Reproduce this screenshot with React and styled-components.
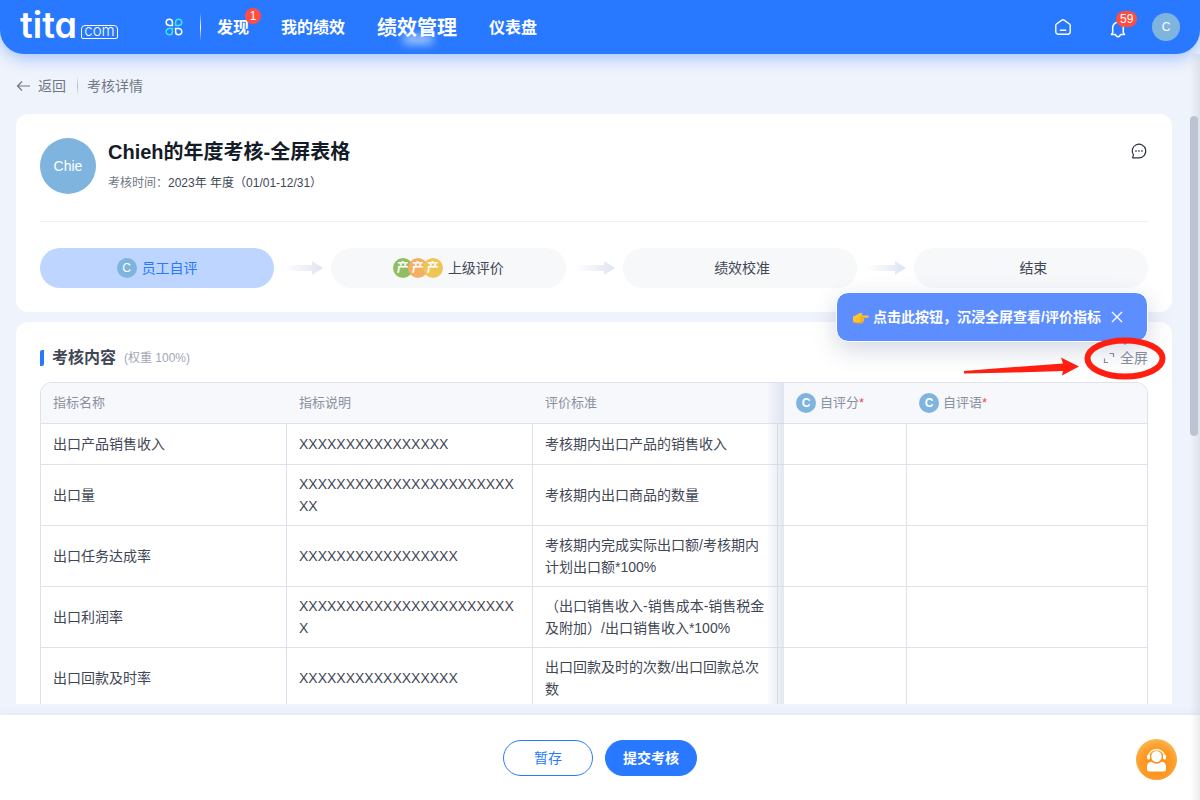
import React from "react";
import styled, { createGlobalStyle } from "styled-components";

const GlobalStyle = createGlobalStyle`
    * {
        box-sizing: border-box;
    }
    body {
        margin: 0;
        font-family: "Liberation Sans", "Noto Sans CJK SC", sans-serif;
        font-size: 14px;
        line-height: 22px;
        color: #3f4755;
        background: #eff3fb;
    }
    button {
        font-family: inherit;
        cursor: pointer;
    }
    a {
        color: inherit;
        text-decoration: none;
    }
`

const Page = styled.div`
    position: relative;
    height: 100vh;
    display: flex;
    flex-direction: column;
    overflow: hidden;
`

const Header = styled.header`
    display: flex;
    align-items: center;
    flex: none;
    height: 54px;
    padding: 0 20px;
    color: #fff;
    background: #2879ff;
    border-radius: 0 0 24px 24px;
    box-shadow: 0 4px 16px rgba(40, 121, 255, 0.4);
`

const Logo = styled.a`
    display: flex;
    align-items: flex-end;
    width: 98px;
    height: 24px;
    margin-right: 47px;
    font-family: Inter, "Liberation Sans", sans-serif;
`

const LogoName = styled.span`
    font-size: 36px;
    line-height: 28px;
    font-weight: 600;
    font-feature-settings: "cv11";
`

const LogoSuffix = styled.span`
    flex: 1;
    margin-left: 4px;
    border: 1px solid #fff;
    border-radius: 4px 4px 2px 2px;
    font-size: 15px;
    font-weight: 300;
    line-height: 10px;
    height: 14px;
    text-align: center;
`

const IconButton = styled.button`
    position: relative;
    display: flex;
    padding: ${(p) => p.$pad || "0"};
    border: none;
    background: none;
    color: inherit;
`

const Divider = styled.span`
    width: 1px;
    height: ${(p) => p.$height};
    margin: 0 ${(p) => p.$space} 0 ${(p) => p.$before};
    background: linear-gradient(transparent, ${(p) => p.$color}, transparent);
`

const Nav = styled.nav`
    display: flex;
    align-items: center;
    gap: 32px;
    flex: 1;
    padding-top: 2px;
`

const NavLink = styled.a`
    position: relative;
    font-size: ${(p) => (p.$active ? "20px" : "16px")};
    font-weight: 700;
    white-space: nowrap;
`

const Glow = styled.span`
    position: absolute;
    left: 26px;
    bottom: -5px;
    width: 30px;
    height: 9px;
    border-radius: 4px;
    background: rgba(255, 255, 255, 0.6);
    filter: blur(4px);
`

const Badge = styled.span`
    position: absolute;
    top: ${(p) => p.$top};
    left: ${(p) => p.$left};
    min-width: 16px;
    height: 16px;
    padding: 0 4px;
    border-radius: 8px;
    background: #ff4d42;
    color: #fff;
    font-size: 12px;
    font-weight: 400;
    line-height: 16px;
    text-align: center;
`

const Tools = styled.div`
    display: flex;
    align-items: center;
    gap: 26px;
`

const Avatar = styled.span`
    display: inline-flex;
    align-items: center;
    justify-content: center;
    flex: none;
    width: ${(p) => p.$size}px;
    height: ${(p) => p.$size}px;
    border-radius: 50%;
    background: ${(p) => p.$color || "#7eb4de"};
    color: #fff;
    font-size: ${(p) => (p.$size > 50 ? "14px" : "12px")};
    font-weight: ${(p) => (p.$bold ? 700 : 400)};
    line-height: 16px;
`

const AvatarGroup = styled.span`
    display: flex;
    ${Avatar} + ${Avatar} {
        margin-left: -5px;
    }
`

const Crumbs = styled.div`
    display: flex;
    align-items: center;
    flex: none;
    height: 60px;
    padding: 4px 16px 0;
    color: #6f7886;
`

const BackLink = styled.a`
    display: flex;
    align-items: center;
    gap: 7px;
`

const Main = styled.main`
    flex: 1;
    min-height: 0;
    overflow: hidden;
    display: flex;
    flex-direction: column;
    gap: 10px;
    padding: 0 28px 0 16px;
    margin-bottom: 11px;
`

const Card = styled.section`
    flex: none;
    padding: 24px;
    border-radius: 12px;
    background: #fff;
`

const Summary = styled.div`
    display: flex;
    gap: 12px;
    padding-bottom: 27px;
    border-bottom: 1px solid #eff1f5;
    margin-bottom: 26px;
`

const SummaryText = styled.div`
    flex: 1;
`

const Title = styled.h1`
    margin: 0 0 6px;
    font-size: 20px;
    line-height: 28px;
    font-weight: 600;
    color: #141c28;
`

const Period = styled.p`
    margin: 0;
    font-size: 12px;
    color: #3f4755;
`

const Muted = styled.span`
    color: #6f7886;
`

const Steps = styled.div`
    display: flex;
    align-items: center;
`

const Step = styled.div`
    flex: 1;
    display: flex;
    align-items: center;
    justify-content: center;
    gap: 5px;
    height: 40px;
    border-radius: 20px;
    background: ${(p) => (p.$active ? "#bdd5ff" : "#f7f8fa")};
    color: ${(p) => (p.$active ? "#2879ff" : "#3f4755")};
`

const StepArrow = styled.svg`
    flex: none;
    width: 57px;
    height: 14px;
`

const SectionHead = styled.div`
    display: flex;
    align-items: center;
    height: 24px;
    margin-bottom: 12px;
`

const SectionTitle = styled.h2`
    display: flex;
    align-items: center;
    gap: 8px;
    margin: 0 8px 0 0;
    font-size: 16px;
    font-weight: 600;
    &::before {
        content: "";
        width: 4px;
        height: 16px;
        border-radius: 2px 0 2px 0;
        background: #2879ff;
    }
`

const Weight = styled.span`
    flex: 1;
    font-size: 12px;
    color: #a0a7b5;
`

const FullScreen = styled.div`
    position: relative;
`

const FullScreenButton = styled.button`
    display: flex;
    align-items: center;
    gap: 5px;
    padding: 0;
    border: none;
    background: none;
    color: #89919f;
    font-size: 14px;
    line-height: 24px;
`

const Tip = styled.div`
    position: absolute;
    right: 0;
    bottom: 28px;
    display: flex;
    align-items: center;
    width: 312px;
    height: 50px;
    padding: 0 24px 0 16px;
    border: 1px solid #fff;
    border-radius: 12px;
    background: #5c8eff;
    background-clip: padding-box;
    box-shadow: 0 8px 24px rgba(40, 60, 110, 0.2);
    color: #fff;
    font-weight: 700;
    white-space: nowrap;
    &::after {
        content: "";
        position: absolute;
        right: 19px;
        bottom: -4px;
        border: 3px solid transparent;
        border-top-color: #5c8eff;
        border-bottom: none;
    }
`

const TipText = styled.span`
    flex: 1;
    margin-left: 4px;
`

const Marker = styled.svg`
    position: absolute;
    right: -19px;
    top: -10px;
    width: 204px;
    height: 44px;
    pointer-events: none;
`

const TableFrame = styled.div`
    border: 1px solid #dfe2ea;
    border-bottom: none;
    border-radius: 12px 12px 0 0;
    overflow: hidden;
`

const Table = styled.table`
    width: 100%;
    table-layout: fixed;
    border-collapse: separate;
    border-spacing: 0;
`

const Col = styled.col`
    width: ${(p) => p.$width};
`

const Th = styled.th`
    position: relative;
    height: 41px;
    padding: 0 12px 0 ${(p) => (p.$pinned ? "18px" : "12px")};
    border-bottom: 1px solid #dfe2ea;
    background: #f7f8fc;
    color: #89919f;
    font-size: 13px;
    font-weight: 400;
    text-align: left;
`

const HeadLabel = styled.span`
    display: flex;
    align-items: center;
    gap: 4px;
`

const Required = styled.span`
    color: #f5484f;
`

const Td = styled.td`
    position: relative;
    height: 41px;
    padding: 8px 12px;
    border-bottom: 1px solid #dfe2ea;
    border-right: 1px solid #dfe2ea;
    word-break: break-all;
    &:last-child {
        border-right: none;
    }
`

// Shade along the left edge of the pinned columns
const PinShade = styled.span`
    position: absolute;
    top: 0;
    bottom: -1px;
    left: -10px;
    width: 16px;
    background: linear-gradient(to right, rgba(200, 208, 226, 0.08), rgba(200, 208, 226, 0.5));
`

const Footer = styled.footer`
    position: relative;
    flex: none;
    display: flex;
    justify-content: center;
    gap: 12px;
    padding: 25px 0 24px;
    background: #fff;
    box-shadow: 0 -2px 8px rgba(60, 80, 130, 0.06);
`

const Button = styled.button`
    min-width: 90px;
    height: 36px;
    padding: 0 17px 2px;
    border: 1px solid #2879ff;
    border-radius: 18px;
    background: ${(p) => (p.$primary ? "#2879ff" : "#fff")};
    color: ${(p) => (p.$primary ? "#fff" : "#2879ff")};
    font-size: 14px;
    font-weight: ${(p) => (p.$primary ? 700 : 400)};
`

const Helper = styled.button`
    position: absolute;
    right: 23px;
    top: 24px;
    width: 41px;
    height: 41px;
    padding: 0;
    border: none;
    background: none;
`

const ScrollThumb = styled.div`
    position: absolute;
    top: 116px;
    right: 2px;
    width: 8px;
    height: 320px;
    border-radius: 4px;
    background: #bcc4d4;
`

const EdgeShade = styled.div`
    position: absolute;
    top: 54px;
    right: 0;
    bottom: 0;
    width: 10px;
    background: linear-gradient(to right, transparent, rgba(0, 0, 0, 0.07));
    pointer-events: none;
`

const rows = [
    ["出口产品销售收入", "XXXXXXXXXXXXXXXX", "考核期内出口产品的销售收入"],
    ["出口量", "XXXXXXXXXXXXXXXXXXXXXXXXX", "考核期内出口商品的数量"],
    ["出口任务达成率", "XXXXXXXXXXXXXXXXX", "考核期内完成实际出口额/考核期内计划出口额*100%"],
    ["出口利润率", "XXXXXXXXXXXXXXXXXXXXXXXX", "（出口销售收入-销售成本-销售税金及附加）/出口销售收入*100%"],
    ["出口回款及时率", "XXXXXXXXXXXXXXXXX", "出口回款及时的次数/出口回款总次数"],
]

function AppsIcon() {
    return (
        <svg width="18" height="18" viewBox="0 0 18 18" fill="none" strokeWidth="1.5">
            <path d="M4.3 1.2A3.1 3.1 0 1 0 4.3 7.4H7.4V4.3A3.1 3.1 0 0 0 4.3 1.2Z" stroke="#fff" />
            <path d="M13.7 1.2A3.1 3.1 0 1 1 13.7 7.4H10.6V4.3A3.1 3.1 0 0 1 13.7 1.2Z" stroke="#3fe3ff" />
            <path d="M4.3 16.8A3.1 3.1 0 1 1 4.3 10.6H7.4V13.7A3.1 3.1 0 0 1 4.3 16.8Z" stroke="#3fe3ff" />
            <path d="M13.7 16.8A3.1 3.1 0 1 0 13.7 10.6H10.6V13.7A3.1 3.1 0 0 0 13.7 16.8Z" stroke="#fff" />
        </svg>
    )
}

function HomeIcon() {
    return (
        <svg width="16" height="16" viewBox="0 0 16 16" fill="none" stroke="#fff" strokeWidth="1.4" strokeLinecap="round" strokeLinejoin="round">
            <path d="M.8 6.4Q.8 5.5 1.5 5L6.9 1.1Q8 .4 9.1 1.1L14.5 5Q15.200 5.500 15.200 6.400V12.800Q15.200 15.200 12.800 15.200H3.200Q.8 15.200.8 12.800Z" />
            <path d="M5.300 11.300H10.700" />
        </svg>
    )
}

function BellIcon() {
    return (
        <svg width="16" height="18" viewBox="0 0 16 18" fill="none" stroke="#fff" strokeWidth="1.5" strokeLinecap="round" strokeLinejoin="round">
            <path d="M1.500 14.500H5.400Q6.200 16.800 8 16.800T10.600 14.500H14.500L13.300 12.600V7.600A5.300 5.300 0 0 0 2.700 7.600V12.600Z" />
        </svg>
    )
}

function ChatIcon() {
    return (
        <svg width="18" height="18" viewBox="0 0 18 18" fill="none" stroke="#2c3340" strokeWidth="1.2" strokeLinejoin="round">
            <path d="M9 15.800H2.800Q2.400 15.800 2.600 15.400L3.500 13A6.800 6.800 0 1 1 9 15.800Z" />
            <path d="M5.300 9H6.700M8.300 9H9.700M11.300 9H12.700" strokeWidth="1.4" />
        </svg>
    )
}

function PointIcon() {
    return (
        <svg width="16" height="14" viewBox="0 0 16 14">
            <path d="M0 6.5Q3.5 5 6 3.6L9 2.7Q10 3.2 9 4.4L8 5.4H14.6Q16 5.6 15.8 6.7T14.6 7.7H10.6Q12 8.8 10.8 9.7Q11.6 11 10.2 11.6Q10.5 13 8.6 13.2H4Q2 13.2 0 12.4Z" fill="#ffc32e" />
            <path d="M7 7.7H11M7.4 9.8H10.6M7 11.7H10M0 12Q4 13.2 8.6 13" stroke="#df8e16" strokeWidth=".7" fill="none" />
        </svg>
    )
}

function HelperIcon() {
    return (
        <svg width="41" height="41" viewBox="0 0 41 41">
            <defs>
                <radialGradient id="helper" cx=".5" cy=".6" r=".62">
                    <stop offset="0" stopColor="#fb8c14" />
                    <stop offset=".6" stopColor="#fd9a26" />
                    <stop offset="1" stopColor="#fdb855" />
                </radialGradient>
            </defs>
            <circle cx="20.5" cy="20.5" r="20.5" fill="url(#helper)" />
            <path d="M12.5 17A8.2 8.2 0 0 1 28.5 17" fill="none" stroke="#fff3dc" strokeWidth="1.6" />
            <rect x="11" y="15.5" width="3" height="5" rx="1.5" fill="#fff" />
            <rect x="27" y="15.5" width="3" height="5" rx="1.5" fill="#fff" />
            <ellipse cx="20.5" cy="17.5" rx="5.2" ry="5.6" fill="#fff" />
            <path d="M11 28Q11 23 15.5 22.8Q20.5 26.6 25.5 22.8Q30 23 30 28V30.5Q30 32.5 28 32.5H13Q11 32.5 11 30.5Z" fill="#fff" />
        </svg>
    )
}

function Arrow() {
    return (
        <StepArrow viewBox="0 0 57 14">
            <defs>
                <linearGradient id="step" gradientUnits="userSpaceOnUse" x1="9" y1="0" x2="49" y2="0">
                    <stop offset="0" stopColor="#dfe5f3" stopOpacity="0" />
                    <stop offset="1" stopColor="#dce3f2" />
                </linearGradient>
            </defs>
            <path d="M9 4H38V0L49 7L38 14V10H9Z" fill="url(#step)" />
        </StepArrow>
    )
}

export default function App() {
    return (
        <>
            <GlobalStyle />
            <Page>
                <Header>
                    <Logo href="#" aria-label="tita.com">
                        <LogoName>tita</LogoName>
                        <LogoSuffix>com</LogoSuffix>
                    </Logo>
                    <IconButton aria-label="应用"><AppsIcon /></IconButton>
                    <Divider $height="28px" $space="16px" $before="17px" $color="#fff" />
                    <Nav>
                        <NavLink href="#">发现<Badge $top="-9px" $left="28px">1</Badge></NavLink>
                        <NavLink href="#">我的绩效</NavLink>
                        <NavLink href="#" $active>绩效管理<Glow /></NavLink>
                        <NavLink href="#">仪表盘</NavLink>
                    </Nav>
                    <Tools>
                        <IconButton $pad="0 13px 0 0" aria-label="首页"><HomeIcon /></IconButton>
                        <IconButton $pad="4px 0 0" aria-label="通知">
                            <BellIcon />
                            <Badge $top="-5px" $left="6px">59</Badge>
                        </IconButton>
                        <Avatar $size={28}>C</Avatar>
                    </Tools>
                </Header>

                <Crumbs>
                    <BackLink href="#">
                        <svg width="15" height="12" viewBox="0 0 15 12" fill="none" stroke="#6f7886" strokeWidth="1.2">
                            <path d="M14 6H1.5M6 1.5L1.5 6L6 10.5" />
                        </svg>
                        返回
                    </BackLink>
                    <Divider $height="20px" $space="9px" $before="11px" $color="#b4bbc8" />
                    <span>考核详情</span>
                </Crumbs>

                <Main>
                    <Card>
                        <Summary>
                            <Avatar $size={56}>Chie</Avatar>
                            <SummaryText>
                                <Title>Chieh的年度考核-全屏表格</Title>
                                <Period><Muted>考核时间：</Muted>2023年 年度（01/01-12/31）</Period>
                            </SummaryText>
                            <div>
                                <IconButton $pad="4px 0 0" aria-label="评论"><ChatIcon /></IconButton>
                            </div>
                        </Summary>
                        <Steps>
                            <Step $active><Avatar $size={20}>C</Avatar>员工自评</Step>
                            <Arrow />
                            <Step>
                                <AvatarGroup>
                                    <Avatar $size={20} $color="#91be62" $bold>产</Avatar>
                                    <Avatar $size={20} $color="#f5ae64" $bold>产</Avatar>
                                    <Avatar $size={20} $color="#efc557" $bold>产</Avatar>
                                </AvatarGroup>
                                上级评价
                            </Step>
                            <Arrow />
                            <Step><AvatarGroup />绩效校准</Step>
                            <Arrow />
                            <Step><AvatarGroup />结束</Step>
                        </Steps>
                    </Card>

                    <Card>
                        <SectionHead>
                            <SectionTitle>考核内容</SectionTitle>
                            <Weight>(权重 100%)</Weight>
                            <FullScreen>
                                <FullScreenButton>
                                    <svg width="12" height="12" viewBox="0 0 12 12" fill="none" stroke="#89919f" strokeWidth="1.2">
                                        <path d="M6.5 1.5H10.5V5M1.5 6.5V10.5H5" />
                                    </svg>
                                    全屏
                                </FullScreenButton>
                                <Tip role="tooltip">
                                    <PointIcon />
                                    <TipText>点击此按钮，沉浸全屏查看/评价指标</TipText>
                                    <IconButton aria-label="关闭">
                                        <svg width="12" height="12" viewBox="0 0 12 12" stroke="#fff" strokeWidth="1.4">
                                            <path d="M1 1L11 11M11 1L1 11" />
                                        </svg>
                                    </IconButton>
                                </Tip>
                                <Marker viewBox="0 0 204 44">
                                    <ellipse cx="162" cy="22.5" rx="37.5" ry="18" fill="none" stroke="#ff1e0f" strokeWidth="6" />
                                    <path d="M1 35Q50 31 100 27.500L98 21.500L116 30.500L99 39.500L100 35L50 36.500L1 37.500Z" fill="#ff1e0f" />
                                </Marker>
                            </FullScreen>
                        </SectionHead>
                        <TableFrame>
                            <Table>
                                <colgroup>
                                    <Col $width="246px" />
                                    <Col $width="246px" />
                                    <Col $width="245px" />
                                    <Col $width="129px" />
                                    <Col />
                                </colgroup>
                                <thead>
                                    <tr>
                                        <Th>指标名称</Th>
                                        <Th>指标说明</Th>
                                        <Th>评价标准</Th>
                                        <Th $pinned>
                                            <PinShade />
                                            <HeadLabel><Avatar $size={20} $bold>C</Avatar><span>自评分<Required>*</Required></span></HeadLabel>
                                        </Th>
                                        <Th>
                                            <HeadLabel><Avatar $size={20} $bold>C</Avatar><span>自评语<Required>*</Required></span></HeadLabel>
                                        </Th>
                                    </tr>
                                </thead>
                                <tbody>
                                    {rows.map(([name, desc, standard]) => (
                                        <tr key={name}>
                                            <Td>{name}</Td>
                                            <Td>{desc}</Td>
                                            <Td>{standard}</Td>
                                            <Td><PinShade /></Td>
                                            <Td />
                                        </tr>
                                    ))}
                                </tbody>
                            </Table>
                        </TableFrame>
                    </Card>
                </Main>

                <Footer>
                    <Button>暂存</Button>
                    <Button $primary>提交考核</Button>
                    <Helper aria-label="客服"><HelperIcon /></Helper>
                </Footer>
                <EdgeShade />
                <ScrollThumb />
            </Page>
        </>
    )
}
